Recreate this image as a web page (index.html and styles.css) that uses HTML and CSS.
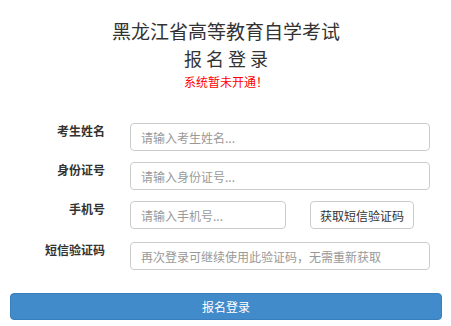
FILE: index.html
```html
<!DOCTYPE html>
<html lang="zh-CN">
<head>
<meta charset="utf-8">
<title>报名登录</title>
<link rel="stylesheet" href="styles.css">
</head>
<body>
<div class="page">
  <header class="head">
    <h1 class="title">黑龙江省高等教育自学考试</h1>
    <h2 class="subtitle">报名登录</h2>
    <p class="notice">系统暂未开通！</p>
  </header>
  <form class="form">
    <div class="row">
      <label class="label">考生姓名</label>
      <input class="input" type="text" placeholder="请输入考生姓名...">
    </div>
    <div class="row">
      <label class="label">身份证号</label>
      <input class="input" type="text" placeholder="请输入身份证号...">
    </div>
    <div class="row row-phone">
      <label class="label">手机号</label>
      <input class="input input-phone" type="text" placeholder="请输入手机号...">
      <button class="btn-code" type="button">获取短信验证码</button>
    </div>
    <div class="row row-last">
      <label class="label">短信验证码</label>
      <input class="input" type="text" placeholder="再次登录可继续使用此验证码，无需重新获取">
    </div>
    <button class="btn-submit" type="button">报名登录</button>
  </form>
</div>
</body>
</html>
```
FILE: styles.css
```css
* { box-sizing: border-box; }
html, body { margin: 0; padding: 0; background: #fff; }
body {
  font-family: "Noto Sans CJK SC", "Noto Sans", sans-serif;
  color: #333;
}
.page { padding: 0 9px 0 10px; }
.head { text-align: center; }
.title {
  margin: 19px 0 0;
  font-size: 19px;
  line-height: 24px;
  font-weight: normal;
  color: #333;
}
.subtitle {
  margin: 3px 0 0;
  font-size: 18px;
  line-height: 24px;
  font-weight: normal;
  letter-spacing: 4px;
  padding-left: 4px;
  color: #333;
}
.notice {
  margin: 4px 0 0;
  font-size: 12px;
  line-height: 16px;
  color: #f00;
}
.form { margin-top: 33px; }
.row {
  display: flex;
  align-items: flex-start;
  gap: 25px;
  margin-bottom: 11px;
}
.row-phone { margin-bottom: 13px; }
.row-last { margin-bottom: 23px; }
.label {
  width: 95px;
  text-align: right;
  font-size: 12px;
  line-height: 16px;
  font-weight: bold;
  color: #333;
}
.input {
  width: 300px;
  height: 28px;
  padding: 0 10px;
  border: 1px solid #ccc;
  border-radius: 4px;
  font-family: inherit;
  font-size: 12px;
  color: #555;
  background: #fff;
  outline: none;
}
.input::placeholder { color: #999; }
.input-phone { width: 156px; }
.btn-code {
  margin-left: -1px;
  width: 104px;
  height: 28px;
  padding: 0;
  border: 1px solid #ccc;
  border-radius: 4px;
  background: #fff;
  font-family: inherit;
  font-size: 12px;
  color: #333;
}
.btn-submit {
  display: block;
  width: 432px;
  height: 27px;
  padding: 0;
  border: 1px solid #3a7fbd;
  border-radius: 4px;
  background: #428bca;
  color: #fff;
  font-family: inherit;
  font-size: 12px;
}
```
